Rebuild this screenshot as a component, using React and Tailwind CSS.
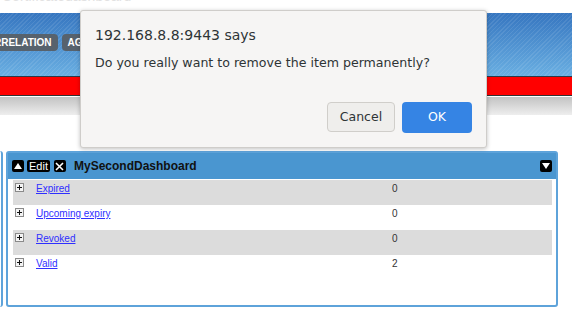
import React from "react";

const rows = [
  { name: "Expired", count: 0 },
  { name: "Upcoming expiry", count: 0 },
  { name: "Revoked", count: 0 },
  { name: "Valid", count: 2 },
];

function PlusBox() {
  return (
    <span className="flex h-[9px] w-[9px] items-center justify-center border border-[#8a8a8a] bg-[#f4f4f4]">
      <svg width="7" height="7" viewBox="0 0 7 7">
        <path d="M1 3.5h5M3.5 1v5" stroke="#111" strokeWidth="1" />
      </svg>
    </span>
  );
}

function TriBox({ down }) {
  return (
    <span className="flex h-[12px] w-[12px] items-center justify-center rounded-[2px] bg-black">
      <svg width="8" height="6" viewBox="0 0 8 6">
        {down ? <path d="M0 0h8L4 6z" fill="#fff" /> : <path d="M0 6h8L4 0z" fill="#fff" />}
      </svg>
    </span>
  );
}

export default function App() {
  return (
    <div className="relative h-[317px] w-[572px] overflow-hidden bg-white font-['Liberation_Sans',Arial,sans-serif]">
      {/* faded page title, mostly cut off */}
      <div className="h-[13px] overflow-hidden">
        <div className="-mt-[12px] pl-[2px] text-[14px] leading-[16px] text-[#e2e2e2]">Certificatedashboard</div>
      </div>

      {/* blue header with nav */}
      <div className="h-[63px] bg-[image:repeating-linear-gradient(135deg,rgba(255,255,255,0.09)_0px,rgba(255,255,255,0.09)_1px,transparent_1px,transparent_3px),linear-gradient(to_bottom,#3676c0,#6aafe2)] pt-[21px]">
        <div className="-ml-[27px] flex gap-[4px]">
          <span className="flex h-[17px] items-center rounded-[4px] bg-[#57626d] px-[6px] text-[10px] font-bold text-white">
            CORRELATION
          </span>
          <span className="flex h-[17px] items-center rounded-[4px] bg-[#57626d] px-[6px] text-[10px] font-bold text-white">
            AGENTS
          </span>
        </div>
      </div>
      <div className="h-[1px] bg-[#2d3a48]" />
      <div className="h-[18px] bg-[#ff0000]" />
      <div className="h-[1px] bg-[#333]" />
      <div className="h-[1px] bg-white" />
      <div className="h-[18px] bg-gradient-to-b from-[#c3c3c3] to-[#eeeeee]" />

      {/* dashboards */}
      <div className="mt-[36px] flex gap-[3px]">
        <div className="h-[156px] w-[3px] rounded-r-[3px] border-r-2 border-[#5ea3da]" />
        <div className="h-[156px] w-[552px] rounded-[3px] border-2 border-[#5ea3da]">
          <div className="flex h-[26px] items-center bg-[#4a96d0] pl-[4px] pr-[4px]">
            <TriBox />
            <span className="ml-[3px] flex h-[12px] items-center rounded-[2px] bg-black px-[2px] text-[11px] leading-none text-white">
              Edit
            </span>
            <span className="ml-[4px] flex h-[12px] w-[12px] items-center justify-center rounded-[2px] bg-black">
              <svg width="9" height="9" viewBox="0 0 9 9">
                <path d="M1 1l7 7M8 1l-7 7" stroke="#fff" strokeWidth="1.6" />
              </svg>
            </span>
            <span className="ml-[8px] text-[12px] font-bold text-[#111]">MySecondDashboard</span>
            <span className="ml-auto">
              <TriBox down />
            </span>
          </div>
          <div className="pl-[5px] pr-[4px] pt-[1px]">
            {rows.map((r, i) => (
              <div
                key={r.name}
                className={`flex h-[25px] items-start pt-[1px] ${i % 2 === 0 ? "bg-[#dcdcdc]" : "bg-white"}`}
              >
                <span className="ml-[2px] mt-[2px]">
                  <PlusBox />
                </span>
                <a href="#" className="ml-[12px] w-[356px] text-[10px] text-[#2f2fff] underline">
                  {r.name}
                </a>
                <span className="text-[10px] text-[#333]">{r.count}</span>
              </div>
            ))}
          </div>
        </div>
      </div>

      {/* confirm dialog */}
      <div className="absolute left-[80px] top-[10px] flex h-[138px] w-[407px] flex-col rounded-[3px] border border-[#cfcdca] bg-[#f6f5f4] pl-[14px] pr-[14px] font-['DejaVu_Sans',sans-serif] shadow-[0_1px_4px_rgba(0,0,0,0.25)]">
        <div className="mt-[14px] text-[14px] text-[#2e3436]">192.168.8.8:9443 says</div>
        <div className="mt-[8px] text-[12.6px] text-[#2e3436]">Do you really want to remove the item permanently?</div>
        <div className="mt-auto mb-[14px] flex justify-end gap-[7px]">
          <button className="h-[30px] w-[68px] rounded-[4px] border border-[#d0ceca] bg-[#efeeec] text-[12.5px] text-[#2e3436]">
            Cancel
          </button>
          <button className="h-[31px] w-[70px] rounded-[4px] bg-[#3584e4] text-[12.5px] text-white">OK</button>
        </div>
      </div>
    </div>
  );
}
